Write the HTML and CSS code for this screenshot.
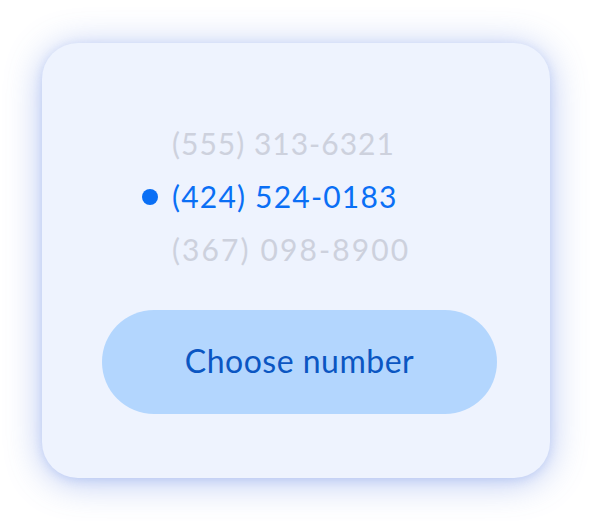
FILE: index.html
```html
<!DOCTYPE html>
<html>
<head>
<meta charset="utf-8">
<link rel="stylesheet" href="styles.css">
</head>
<body>
<div class="stage">
  <div class="card">
    <ul class="numbers">
      <li class="num">(555) 313-6321</li>
      <li class="num selected"><span class="dot"></span>(424) 524-0183</li>
      <li class="num wide">(367) 098-8900</li>
    </ul>
    <button class="choose">Choose number</button>
  </div>
</div>
</body>
</html>
```
FILE: styles.css
```css
html, body {
  margin: 0;
  padding: 0;
  background: #ffffff;
}
.stage {
  padding: 43px 42px;
  font-family: Lato, "Noto Sans", sans-serif;
}
.card {
  width: 508px;
  height: 435px;
  box-sizing: border-box;
  background: #eef3fe;
  border-radius: 36px;
  box-shadow: 0 4px 36px rgba(80, 120, 225, 0.42), 0 2px 10px rgba(80, 120, 225, 0.18);
  padding-top: 74px;
}
.numbers {
  list-style: none;
  margin: 0;
  padding: 0 0 0 130px;
}
.num {
  position: relative;
  font-size: 30px;
  font-weight: 400;
  line-height: 53px;
  height: 53px;
  color: #cdd1dd;
  letter-spacing: 1px;
}
.num.selected {
  color: #0a6ff5;
  letter-spacing: 1.2px;
}
.num.wide {
  letter-spacing: 2.1px;
}
.dot {
  position: absolute;
  left: -30px;
  top: 19px;
  width: 16px;
  height: 16px;
  border-radius: 50%;
  background: #0a6ff5;
}
.choose {
  display: block;
  margin: 34px 0 0 60px;
  width: 395px;
  height: 104px;
  border: none;
  border-radius: 52px;
  background: #b3d6fe;
  color: #0b56c2;
  font-family: Lato, "Noto Sans", sans-serif;
  font-size: 32px;
  font-weight: 400;
  letter-spacing: 0.5px;
  padding: 0 0 4px 0;
}
```
